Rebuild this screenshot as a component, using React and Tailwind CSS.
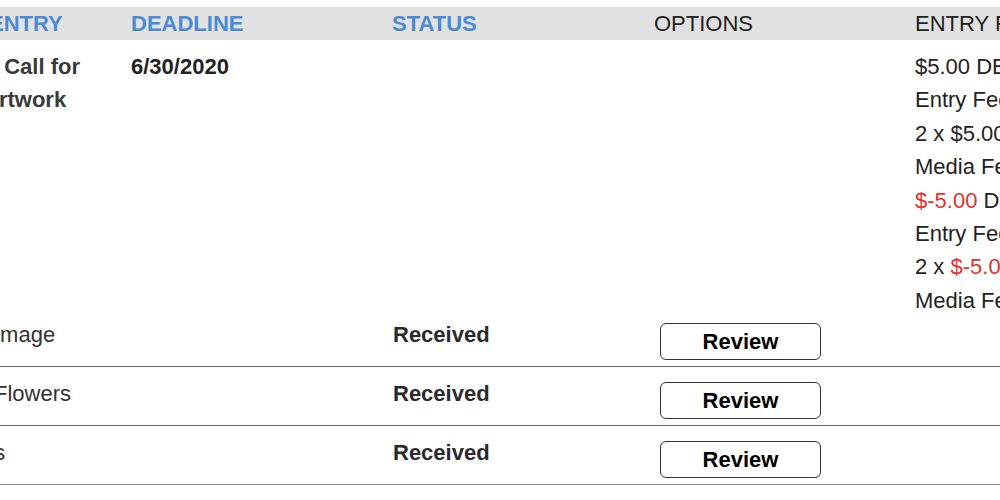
const fee = [
    { parts: [{ t: '$5.00 DEBIT' }] },
    { parts: [{ t: 'Entry Fee' }] },
    { parts: [{ t: '2 x $5.00' }] },
    { parts: [{ t: 'Media Fee' }] },
    { parts: [{ t: '$-5.00', red: true }, { t: ' DISCOUNT' }] },
    { parts: [{ t: 'Entry Fee' }] },
    { parts: [{ t: '2 x ' }, { t: '$-5.00', red: true }] },
    { parts: [{ t: 'Media Fee' }] },
];

const items = [
    { name: 'Image', pad: 'pl-[11px]', line: 'border-[#666]' },
    { name: 'Flowers', pad: 'pl-[11px]', line: 'border-[#666]' },
    { name: 'Roses', pad: 'ml-[-40px]', line: 'border-[#888]' },
];

// column widths shared by header and rows
const C1 = 'w-[148px] shrink-0';
const C2 = 'w-[261px] shrink-0';
const C3 = 'w-[208px] shrink-0';
const C4 = 'w-[315px] shrink-0';
const C5 = 'w-[220px] shrink-0';

const SubRow = ({ item }) => (
    <div className={`flex h-[59px] border-b ${item.line}`}>
        <div className={`${C1} pt-[10px] text-[#333] whitespace-nowrap`}>
            <div className={item.pad}>{item.name}</div>
        </div>
        <div className={C2} />
        <div className={`${C3} pt-[10px] pl-px font-bold text-[#2a2a2a]`}>Received</div>
        <div className={`${C4} pt-[15px]`}>
            <button className="ml-[60px] w-[161px] h-[37px] rounded-[6px] border border-[#333] bg-white font-bold text-black leading-none">
                Review
            </button>
        </div>
        <div className={C5} />
    </div>
);

export default function App() {
    return (
        <div
            className="w-[1000px] h-[500px] overflow-hidden bg-white pt-[7px] text-[22px] leading-[33.4px]"
            style={{ fontFamily: '"Liberation Sans", Arial, sans-serif' }}
        >
            <div className="ml-[-17px] w-[1160px]">
                {/* Header */}
                <div className="flex h-[33px] bg-[#e1e1e1] leading-[33px]">
                    <div className={`${C1} pl-[6px] font-bold text-[#4a8ad8]`}>ENTRY</div>
                    <div className={`${C2} font-bold text-[#4a8ad8]`}>DEADLINE</div>
                    <div className={`${C3} font-bold text-[#4a8ad8]`}>STATUS</div>
                    <div className={`${C4} pl-[54px] text-[#222]`}>OPTIONS</div>
                    <div className={`${C5} whitespace-nowrap text-[#222]`}>ENTRY FEE</div>
                </div>

                {/* Main entry row */}
                <div className="flex pt-[10px]">
                    <div className={`${C1} font-bold text-[#3a3a3a]`}>A Call for Artwork</div>
                    <div className={`${C2} font-bold text-[#222]`}>6/30/2020</div>
                    <div className={C3} />
                    <div className={C4} />
                    <div className={`${C5} mb-[-9px] text-[#222] whitespace-nowrap`}>
                        {fee.map((line, i) => (
                            <div key={i}>
                                {line.parts.map((p, j) => (
                                    <span key={j} className={p.red ? 'text-[#e2322b]' : ''}>
                                        {p.t}
                                    </span>
                                ))}
                            </div>
                        ))}
                    </div>
                </div>

                {items.map((it) => (
                    <SubRow key={it.name} item={it} />
                ))}
            </div>
        </div>
    );
}
